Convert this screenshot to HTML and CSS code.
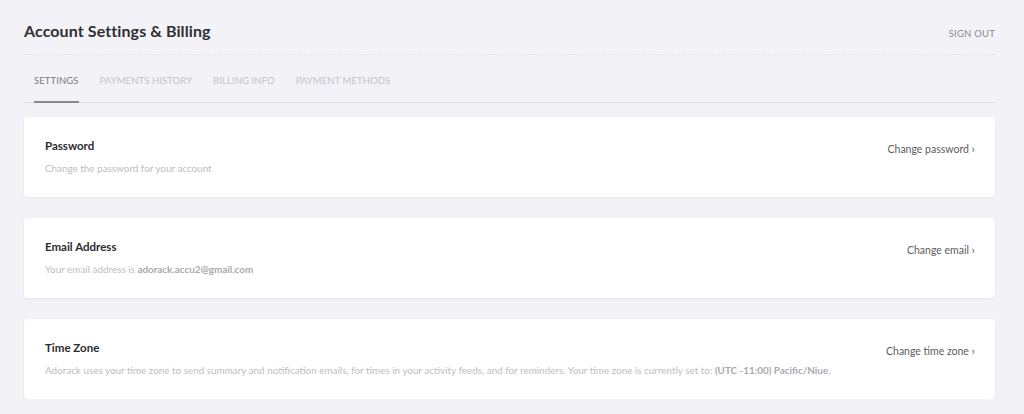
FILE: index.html
```html
<!DOCTYPE html>
<html lang="en">
<head>
<meta charset="UTF-8" />
<meta name="viewport" content="width=device-width, initial-scale=1.0" />
<title>Account Settings &amp; Billing</title>
<link rel="stylesheet" href="styles.css">
</head>
<body>

<div class="page">
  <!-- Заголовок страницы -->
  <div class="page-header">
    <h1 class="page-title">Account Settings &amp; Billing</h1>
    <a href="#" class="sign-out">SIGN OUT</a>
  </div>

  <!-- Вкладки -->
  <div class="tabs">
    <a href="#" class="tab tab-active">SETTINGS</a>
    <a href="#" class="tab">PAYMENTS HISTORY</a>
    <a href="#" class="tab">BILLING INFO</a>
    <a href="#" class="tab">PAYMENT METHODS</a>
  </div>

  <!-- Карточки настроек -->
  <div class="settings-list">
    <div class="setting-card">
      <div class="setting-info">
        <div class="setting-title">Password</div>
        <div class="setting-desc">Change the password for your account</div>
      </div>
      <a href="#" class="setting-link">Change password <span class="chevron">&rsaquo;</span></a>
    </div>

    <div class="setting-card">
      <div class="setting-info">
        <div class="setting-title">Email Address</div>
        <div class="setting-desc">Your email address is <b>adorack.accu2@gmail.com</b></div>
      </div>
      <a href="#" class="setting-link">Change email <span class="chevron">&rsaquo;</span></a>
    </div>

    <div class="setting-card">
      <div class="setting-info">
        <div class="setting-title">Time Zone</div>
        <div class="setting-desc">Adorack uses your time zone to send summary and notification emails, for times in your activity feeds, and for reminders. Your time zone is currently set to: <b>(UTC -11:00) Pacific/Niue</b>.</div>
      </div>
      <a href="#" class="setting-link">Change time zone <span class="chevron">&rsaquo;</span></a>
    </div>
  </div>
</div>

</body>
</html>
```

FILE: styles.css
```css
body {
  margin: 0;
  background-color: #f3f2f7;
  font-family: 'Lato', 'Liberation Sans', sans-serif;
  color: #2b2b2b;
}

a {
  text-decoration: none;
}

.page {
  padding: 19px 29px 0 24px;
}

/* Шапка */
.page-header {
  display: flex;
  justify-content: space-between;
  align-items: center;
  padding: 2px 0 14px;
  border-bottom: 1px dashed #e3e2e8;
}

.page-title {
  margin: 0;
  font-size: 16px;
  font-weight: 700;
  color: #2f2f33;
  letter-spacing: 0.1px;
}

.sign-out {
  font-size: 9.5px;
  color: #8a8a8a;
  margin-top: 6px;
  letter-spacing: 0.2px;
}

/* Вкладки */
.tabs {
  display: flex;
  gap: 21px;
  padding: 0 10px;
  border-bottom: 1px solid #e2e1e6;
  margin-top: 20px;
}

.tab {
  font-size: 9.5px;
  color: #c4c4c8;
  padding-bottom: 15px;
  border-bottom: 2px solid transparent;
  margin-bottom: -1px;
  letter-spacing: 0.08px;
}

.tab-active {
  color: #7c7c80;
  border-bottom-color: #8a8a8e;
}

/* Карточки */
.settings-list {
  display: flex;
  flex-direction: column;
  gap: 21px;
  margin-top: 14px;
}

.setting-card {
  display: flex;
  justify-content: space-between;
  align-items: center;
  height: 80px;
  box-sizing: border-box;
  padding: 0 20px 2px 21px;
  background: #fff;
  border-radius: 4px;
  box-shadow: 0 1px 3px rgba(0, 0, 0, 0.05);
}

.setting-title {
  font-size: 11.5px;
  font-weight: 700;
  color: #2b2b2e;
}

.setting-desc {
  margin-top: 10px;
  font-size: 9.9px;
  color: #bdbdc1;
}

.setting-desc b {
  color: #a9a9ad;
}

.setting-link {
  font-size: 10.5px;
  color: #5c5c60;
  white-space: nowrap;
  margin-top: -15px;
}

.chevron {
  font-size: 12px;
}
```
